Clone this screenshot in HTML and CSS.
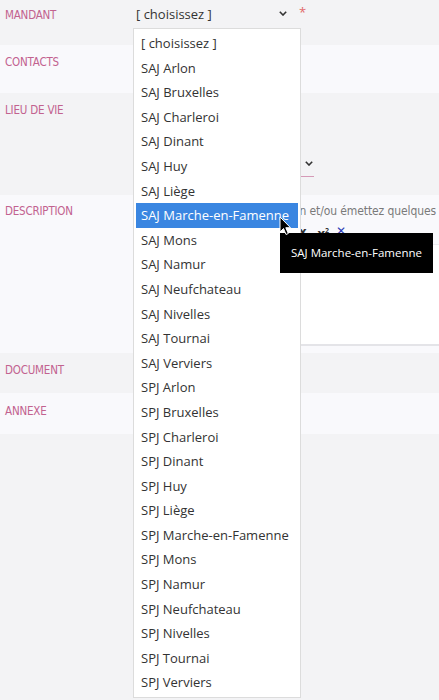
FILE: index.html
```html
<!DOCTYPE html>
<html lang="fr">
<head>
<meta charset="utf-8">
<link rel="stylesheet" href="styles.css">
</head>
<body>
<div class="form">
  <div class="row row-grey row-mandant">
    <div class="label">MANDANT</div>
    <div class="field">
      <div class="select select-mandant">
        <span class="select-text">[ choisissez ]</span>
        <svg class="chev" width="8" height="5" viewBox="0 0 8 5"><polyline points="0.8,0.8 4,4 7.2,0.8" fill="none" stroke="#333" stroke-width="1.6"/></svg>
      </div>
      <span class="req">*</span>
    </div>
  </div>
  <div class="row row-light row-contacts">
    <div class="label">CONTACTS</div>
    <div class="field"></div>
  </div>
  <div class="row row-grey row-lieu">
    <div class="label">LIEU DE VIE</div>
    <div class="field field-lieu">
      <div class="select select-lieu">
        <span class="select-text"></span>
        <svg class="chev" width="8" height="5" viewBox="0 0 8 5"><polyline points="0.8,0.8 4,4 7.2,0.8" fill="none" stroke="#333" stroke-width="1.6"/></svg>
      </div>
    </div>
  </div>
  <div class="row row-light row-desc">
    <div class="label">DESCRIPTION</div>
    <div class="field field-desc">
      <div class="hint"><span>Rédigez une description et/ou émettez quelques</span></div>
      <div class="editor">
        <div class="toolbar">
          <span class="tb">x<sub>2</sub></span>
          <span class="tb">x<sup>2</sup></span>
          <span class="tb tb-blue">✕</span>
        </div>
        <div class="editor-body"></div>
      </div>
    </div>
  </div>
  <div class="row row-grey row-doc">
    <div class="label">DOCUMENT</div>
    <div class="field"></div>
  </div>
  <div class="row row-light row-annexe">
    <div class="label">ANNEXE</div>
    <div class="field"></div>
  </div>
</div>

<ul class="dropdown">
  <li>[ choisissez ]</li>
  <li>SAJ Arlon</li>
  <li>SAJ Bruxelles</li>
  <li>SAJ Charleroi</li>
  <li>SAJ Dinant</li>
  <li>SAJ Huy</li>
  <li>SAJ Liège</li>
  <li class="active">SAJ Marche-en-Famenne</li>
  <li>SAJ Mons</li>
  <li>SAJ Namur</li>
  <li>SAJ Neufchateau</li>
  <li>SAJ Nivelles</li>
  <li>SAJ Tournai</li>
  <li>SAJ Verviers</li>
  <li>SPJ Arlon</li>
  <li>SPJ Bruxelles</li>
  <li>SPJ Charleroi</li>
  <li>SPJ Dinant</li>
  <li>SPJ Huy</li>
  <li>SPJ Liège</li>
  <li>SPJ Marche-en-Famenne</li>
  <li>SPJ Mons</li>
  <li>SPJ Namur</li>
  <li>SPJ Neufchateau</li>
  <li>SPJ Nivelles</li>
  <li>SPJ Tournai</li>
  <li>SPJ Verviers</li>
</ul>

<div class="tooltip">SAJ Marche-en-Famenne</div>

<svg class="cursor" width="13" height="20" viewBox="0 0 13 20">
  <path d="M1 1 L1 16 L4.5 12.5 L7 18.5 L9.3 17.5 L6.8 11.7 L11.5 11.7 Z" fill="#000" stroke="#fff" stroke-width="1" stroke-linejoin="round"/>
</svg>
</body>
</html>
```

FILE: styles.css
```css
html, body {
  margin: 0;
  padding: 0;
}
body {
  background: #f3f3f5;
  width: 439px;
  height: 700px;
  overflow: hidden;
  position: relative;
  font-family: "Open Sans", "DejaVu Sans", sans-serif;
  color: #333;
}
.form {
  display: flex;
  flex-direction: column;
}
.row {
  display: flex;
  align-items: stretch;
}
.row-grey { background: #f3f3f5; }
.row-light { background: #f9f9fc; }
.row-mandant { height: 45px; }
.row-contacts { height: 48px; }
.row-lieu { height: 102px; }
.row-desc { height: 158px; }
.row-doc { height: 40px; }
.row-annexe { height: 41px; }

.label {
  flex: 0 0 128px;
  padding: 7px 0 0 5px;
  font-family: "DejaVu Sans Condensed", "Liberation Sans", sans-serif;
  font-size: 11.5px;
  line-height: 15px;
  color: #c2628f;
  letter-spacing: -0.2px;
}
.row-mandant .label { padding-top: 8px; }
.row-contacts .label { padding-top: 10px; }
.row-lieu .label { padding-top: 10px; }
.row-desc .label { padding-top: 9px; }
.row-doc .label { padding-top: 10px; }
.row-annexe .label { padding-top: 11px; }

.field {
  flex: 1 1 auto;
  min-width: 0;
  display: flex;
  position: relative;
  overflow: hidden;
}
.select {
  display: flex;
  align-items: center;
  justify-content: space-between;
  box-sizing: border-box;
}
.select-mandant {
  width: 154px;
  height: 26px;
  margin-left: 3px;
  padding-right: 3px;
}
.select-text {
  font-size: 13px;
  color: #333;
  line-height: 18px;
  margin-top: 2px;
}
.chev {
  display: block;
}
.select-mandant .chev { margin-top: 1px; }
.req {
  color: #e26a6a;
  font-size: 13px;
  margin-left: 9px;
  margin-top: 6px;
  line-height: 13px;
}
.field-lieu {
  align-items: flex-start;
}
.select-lieu {
  width: 181px;
  height: 84px;
  border-bottom: 1px solid #d59ab7;
  padding-right: 1px;
  align-items: flex-end;
  padding-bottom: 10px;
}

.field-desc {
  flex-direction: column;
}
.hint {
  display: flex;
  justify-content: flex-end;
  overflow: hidden;
  margin-left: 168px;
  padding-right: 3px;
  font-family: "DejaVu Sans Condensed", "Liberation Sans", sans-serif;
  font-size: 12px;
  letter-spacing: -0.1px;
  color: #7a7a7a;
  white-space: nowrap;
  margin-top: 8px;
  line-height: 17px;
}
.hint span { flex: 0 0 auto; }
.editor {
  margin-top: 3px;
  display: flex;
  flex-direction: column;
}
.toolbar {
  height: 22px;
  box-sizing: border-box;
  display: flex;
  align-items: flex-start;
  gap: 7px;
  padding-left: 166px;
  padding-top: 1px;
  border-bottom: 1px solid #ececf0;
  font-size: 13px;
  line-height: 14px;
}
.tb { color: #333; font-weight: bold; }
.tb sub, .tb sup { font-size: 7px; }
.tb-blue { color: #2a3bb5; font-size: 12px; font-weight: normal; }
.editor-body {
  height: 99px;
  background: #fff;
  border-bottom: 2px solid #e4e4e8;
}

.dropdown {
  position: absolute;
  left: 133px;
  top: 28px;
  width: 168px;
  margin: 0;
  padding: 2px;
  box-sizing: border-box;
  list-style: none;
  background: #fff;
  border: 1px solid #dcdcdc;
  font-size: 13px;
}
.dropdown li {
  height: 24.6px;
  line-height: 24.6px;
  padding-left: 5px;
  color: #333;
  white-space: nowrap;
}
.dropdown li.active {
  background: #3a86e1;
  color: #fff;
}
.tooltip {
  position: absolute;
  left: 280px;
  top: 233px;
  width: 153px;
  height: 40px;
  background: #000;
  color: #fff;
  font-size: 11.5px;
  line-height: 40px;
  text-align: center;
  white-space: nowrap;
}
.cursor {
  position: absolute;
  left: 279px;
  top: 216px;
}
```
